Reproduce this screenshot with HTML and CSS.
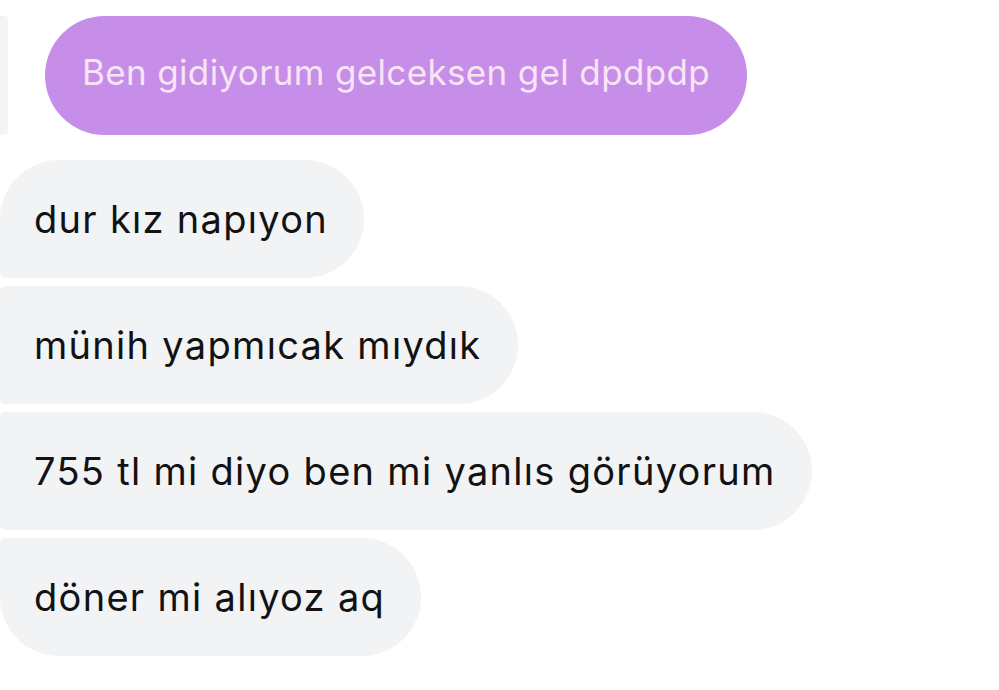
FILE: index.html
```html
<!DOCTYPE html>
<html lang="tr">
<head>
<meta charset="utf-8">
<title>Mesajlar</title>
<link rel="stylesheet" href="styles.css">
</head>
<body>
<div class="thread">
  <div class="row-sent">
    <div class="edge"></div>
    <div class="bubble sent">Ben gidiyorum gelceksen gel dpdpdp</div>
  </div>
  <div class="group-received">
    <div class="bubble received first">dur kız napıyon</div>
    <div class="bubble received">münih yapmıcak mıydık</div>
    <div class="bubble received">755 tl mi diyo ben mi yanlıs görüyorum</div>
    <div class="bubble received last">döner mi alıyoz aq</div>
  </div>
</div>
</body>
</html>
```

FILE: styles.css
```css
html, body {
  margin: 0;
  padding: 0;
  background: #ffffff;
}

body {
  font-family: Inter, "Noto Sans", "Liberation Sans", sans-serif;
  width: 999px;
  height: 690px;
  overflow: hidden;
}

.thread {
  display: flex;
  flex-direction: column;
  padding-top: 16px;
}

.row-sent {
  display: flex;
  align-items: stretch;
  gap: 37px;
}

.edge {
  width: 8px;
  background: #f3f4f6;
  border-radius: 0 4px 4px 0;
}

.bubble {
  line-height: 44px;
  white-space: nowrap;
  width: max-content;
  border-radius: 60px;
}

.sent {
  font-size: 35px;
  letter-spacing: 0.35px;
  padding: 34px 37px 41px 37px;
  background: #c68ee9;
  color: #f7e4f6;
}

.group-received {
  display: flex;
  flex-direction: column;
  gap: 8px;
  margin-top: 25px;
}

.received {
  font-size: 38px;
  letter-spacing: 1.3px;
  padding: 37px 36px 37px 34px;
  background: #f2f3f5;
  color: #121214;
  border-radius: 5px 60px 60px 5px;
}

.received.first {
  border-top-left-radius: 60px;
}

.received.last {
  border-bottom-left-radius: 60px;
}
```
